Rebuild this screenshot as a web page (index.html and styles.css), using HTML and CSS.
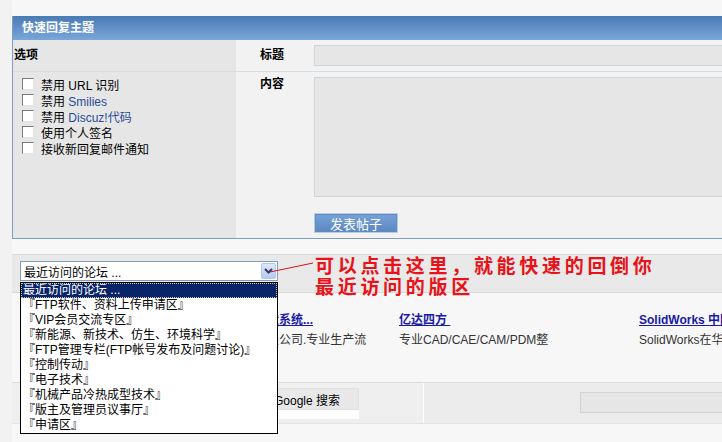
FILE: index.html
```html
<!DOCTYPE html>
<html lang="zh-CN">

<head>
    <meta charset="UTF-8">
    <title>快速回复主题</title>
    <link rel="stylesheet" href="styles.css">
</head>

<body>
    <div class="page">
        <!-- 快速回复 -->
        <div class="reply">
            <div class="reply-head">快速回复主题</div>
            <div class="reply-row row-title">
                <div class="opt-cell"><b>选项</b></div>
                <div class="label-cell">标题</div>
                <div class="field-cell"><input type="text" class="txt"></div>
            </div>
            <div class="reply-row row-body">
                <div class="opt-cell">
                    <label class="opt"><input type="checkbox"><span>禁用 URL 识别</span></label>
                    <label class="opt"><input type="checkbox"><span>禁用 <span class="em">Smilies</span></span></label>
                    <label class="opt"><input type="checkbox"><span>禁用 <span class="em">Discuz!代码</span></span></label>
                    <label class="opt"><input type="checkbox"><span>使用个人签名</span></label>
                    <label class="opt"><input type="checkbox"><span>接收新回复邮件通知</span></label>
                </div>
                <div class="label-cell">内容</div>
                <div class="field-cell">
                    <textarea class="area"></textarea>
                    <button class="submit">发表帖子</button>
                </div>
            </div>
        </div>

        <!-- 论坛跳转 -->
        <div class="jump">
            <div class="select">
                <span>最近访问的论坛 ...</span>
                <span class="arrow">
                    <svg width="9" height="6" viewBox="0 0 9 6"><path d="M1 1 L4.5 4.5 L8 1" fill="none" stroke="#2c3d6c" stroke-width="2"/></svg>
                </span>
            </div>
            <ul class="drop">
                <li class="on">最近访问的论坛 ...</li>
                <li>『FTP软件、资料上传申请区』</li>
                <li>『VIP会员交流专区』</li>
                <li>『新能源、新技术、仿生、环境科学』</li>
                <li>『FTP管理专栏(FTP帐号发布及问题讨论)』</li>
                <li>『控制传动』</li>
                <li>『电子技术』</li>
                <li>『机械产品冷热成型技术』</li>
                <li>『版主及管理员议事厅』</li>
                <li>『申请区』</li>
            </ul>
            <div class="tip">可以点击这里，就能快速的回倒你<br>最近访问的版区</div>
        </div>

        <!-- 友情链接 -->
        <div class="links">
            <div class="link-col">
                <a class="link-title" href="#">专业的三维设计与制造系统...</a>
                <div class="link-desc">北京数码大方科技有限公司.专业生产流</div>
            </div>
            <div class="link-col">
                <a class="link-title" href="#">亿达四方&nbsp;</a>
                <div class="link-desc">专业CAD/CAE/CAM/PDM整</div>
            </div>
            <div class="link-col">
                <a class="link-title" href="#">SolidWorks 中国</a>
                <div class="link-desc">SolidWorks在华</div>
            </div>
        </div>

        <!-- 搜索 -->
        <div class="search">
            <div class="search-left">
                <div class="gbox"><button class="gbtn">Google 搜索</button></div>
            </div>
            <div class="search-right"><input type="text" class="txt stxt"></div>
        </div>

        <svg class="pointer" width="50" height="16" viewBox="0 0 50 16">
            <line x1="2" y1="12" x2="45" y2="3" stroke="#d8121c" stroke-width="1"/>
        </svg>
    </div>
</body>

</html>
```

FILE: styles.css
```css
/* 全局 */
html,
body {
    margin: 0;
    overflow: hidden;
}

body {
    background-color: #f2f2f2;
    font-family: "Liberation Sans", "Noto Sans CJK SC", sans-serif;
    font-size: 12px;
    color: #000;
}

.page {
    position: relative;
    margin-left: 12px;
    width: 790px;
    min-height: 442px;
    padding-top: 16px;
    background-color: #f7f7f7;
}

/* 快速回复 */
.reply {
    border-left: 1px solid #7f9cc2;
    border-bottom: 1px solid #7f9cc2;
}

.reply-head {
    height: 24px;
    line-height: 24px;
    padding-left: 9px;
    color: #fff;
    font-weight: bold;
    background: linear-gradient(#4a7bb5, #7aa6d9);
}

.reply-row {
    display: flex;
}

.row-title {
    height: 31px;
    line-height: 31px;
    border-bottom: 1px solid #d4dce6;
}

.row-body {
    height: 166px;
}

.opt-cell {
    width: 222px;
    padding-left: 1px;
    background-color: #e6e6e6;
}

.label-cell {
    width: 78px;
    box-sizing: border-box;
    padding-left: 24px;
    font-weight: bold;
    background-color: #f2f2f2;
}

.row-body .label-cell {
    padding-top: 4px;
    line-height: 16px;
}

.field-cell {
    flex: 1;
    background-color: #f2f2f2;
}

.txt {
    display: block;
    width: 460px;
    height: 21px;
    margin: 5px 0 0;
    padding: 0;
    box-sizing: border-box;
    background-color: #e6e6e6;
    border: 1px solid #cdd5de;
}

.area {
    display: block;
    width: 460px;
    height: 120px;
    margin: 5px 0 0;
    padding: 0;
    box-sizing: border-box;
    background-color: #e6e6e6;
    border: 1px solid #cdd5de;
    resize: none;
}

.submit {
    display: block;
    width: 84px;
    height: 20px;
    margin-top: 16px;
    padding: 0;
    font-family: inherit;
    font-size: 13px;
    color: #fff;
    background: linear-gradient(#78a2d6, #5a87c1);
    border: 1px solid #b9cde7;
    box-shadow: inset 0 0 0 1px #5f8bc4;
}

/* 选项 */
.row-body .opt-cell {
    padding-top: 4px;
}

.opt {
    display: flex;
    align-items: center;
    height: 16px;
    padding-left: 8px;
}

.opt input {
    appearance: none;
    width: 12px;
    height: 12px;
    margin: 0 7px 0 0;
    background-color: #fff;
    border-top: 1px solid #7a7a7a;
    border-left: 1px solid #7a7a7a;
    border-right: 1px solid #e4e4e4;
    border-bottom: 1px solid #e4e4e4;
}

.em {
    color: #2a4c94;
}

/* 论坛跳转 */
.jump {
    position: relative;
    height: 31px;
    margin-top: 15px;
    padding: 6px 0 0 8px;
    background-color: #e9e9e9;
    border-top: 1px solid #dadada;
    border-bottom: 1px solid #dadada;
}

.select {
    display: flex;
    align-items: center;
    justify-content: space-between;
    width: 258px;
    height: 20px;
    box-sizing: border-box;
    padding: 0 1px 0 3px;
    background-color: #fff;
    border: 1px solid #7f9db9;
}

.arrow {
    display: flex;
    align-items: center;
    justify-content: center;
    width: 15px;
    height: 16px;
    box-sizing: border-box;
    background: linear-gradient(#dce8fb, #b6cbf2);
    border: 1px solid #b3c6ec;
    border-radius: 2px;
}

.drop {
    position: absolute;
    left: 8px;
    top: 27px;
    z-index: 5;
    width: 258px;
    box-sizing: border-box;
    margin: 0;
    padding: 0;
    list-style: none;
    background-color: #fff;
    border: 1px solid #000;
}

.drop li {
    height: 15px;
    line-height: 15px;
    padding-left: 2px;
    white-space: nowrap;
}

.drop li.on {
    color: #fff;
    background-color: #0a246a;
    outline: 1px dotted #c8c8a0;
    outline-offset: -1px;
}

.tip {
    position: absolute;
    left: 303px;
    top: -1px;
    z-index: 4;
    font-family: "Noto Sans CJK SC", sans-serif;
    font-size: 19px;
    font-weight: bold;
    line-height: 21px;
    letter-spacing: 3.7px;
    color: #e81218;
    white-space: nowrap;
}

.pointer {
    position: absolute;
    left: 256px;
    top: 260px;
    z-index: 6;
}

/* 友情链接 */
.links {
    display: grid;
    grid-template-columns: repeat(3, 240px);
    height: 69px;
    padding: 20px 0 0 147px;
}

.link-title {
    display: inline-block;
    line-height: 15px;
    font-weight: bold;
    color: #1a1aa8;
    text-decoration: underline;
    white-space: nowrap;
}

.link-desc {
    margin-top: 5px;
    line-height: 15px;
    color: #333;
    white-space: nowrap;
}

/* 搜索 */
.search {
    display: flex;
    height: 40px;
    border-top: 1px solid #dcdcdc;
    border-bottom: 1px solid #e4e4e4;
}

.search-left {
    width: 411px;
    background-color: #efefef;
    border-right: 1px solid #fff;
}

.gbox {
    width: 89px;
    height: 31px;
    margin: 5px 0 0 258px;
    background-color: #fff;
}

.gbtn {
    display: block;
    width: 89px;
    height: 22px;
    padding: 0 0 0 3px;
    text-align: left;
    font-family: inherit;
    font-size: 12px;
    background-color: #e8e8e8;
    border: 1px solid #e0e0e0;
}

.search-right {
    flex: 1;
    background-color: #ececec;
}

.stxt {
    width: 200px;
    margin: 9px 0 0 156px;
    border-color: #d2d2d2;
}
```
